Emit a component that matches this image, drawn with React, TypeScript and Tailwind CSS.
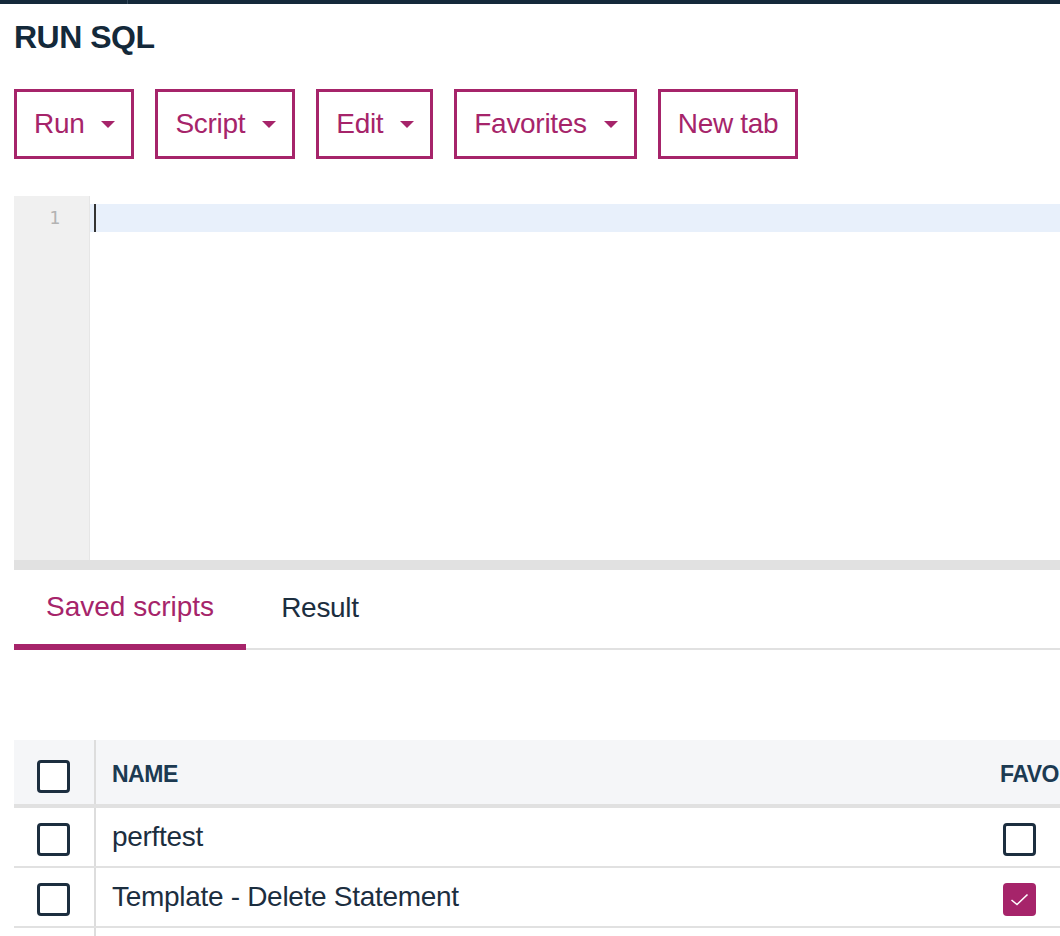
import React from 'react'

const MAGENTA = '#a6246a'

function Caret() {
  return (
    <svg width="14" height="7" viewBox="0 0 14 7" className="shrink-0">
      <path d="M0 0 L14 0 L7 7 Z" fill={MAGENTA} />
    </svg>
  )
}

function ToolButton({ label, menu = true }: { label: string; menu?: boolean }) {
  return (
    <button
      className={
        menu
          ? 'h-[70px] flex items-center gap-[17px] border-[3px] border-[#a6246a] pl-[17px] pr-[16px] text-[28px] text-[#a6246a] tracking-[-0.3px] bg-white'
          : 'h-[70px] flex items-center border-[3px] border-[#a6246a] pl-[17px] pr-[17px] text-[28px] text-[#a6246a] tracking-[-0.3px] bg-white'
      }
    >
      <span>{label}</span>
      {menu && <Caret />}
    </button>
  )
}

function Box({ checked = false }: { checked?: boolean }) {
  if (checked) {
    return (
      <div className="w-[33px] h-[33px] rounded-[4px] bg-[#a6246a] flex items-center justify-center">
        <svg width="19" height="13" viewBox="0 0 19 13">
          <path d="M1.5 7 L7 11.5 L17.5 1.5" fill="none" stroke="white" strokeWidth="1.6" />
        </svg>
      </div>
    )
  }
  return <div className="w-[33px] h-[33px] rounded-[4px] border-[3px] border-[#1c2e3f] bg-white" />
}

const rows = [
  { name: 'perftest', fav: false },
  { name: 'Template - Delete Statement', fav: true },
  { name: '', fav: false },
]

export default function App() {
  return (
    <div
      className="w-screen h-[936px] overflow-hidden bg-white text-[#1c2e3f]"
      style={{ fontFamily: '"Liberation Sans", Arial, sans-serif' }}
    >
      {/* top strip */}
      <div className="h-[4px] bg-[#15293a] flex">
        <div className="w-[128px] border-r border-[#34495c]" />
      </div>

      <div className="w-[1200px] pl-[14px]">
        <h1 className="mt-[15px] text-[32px] leading-[36px] font-bold tracking-[-0.5px] text-[#14293a]">RUN SQL</h1>

        <div className="mt-[34px] flex gap-[21px]">
          <ToolButton label="Run" />
          <ToolButton label="Script" />
          <ToolButton label="Edit" />
          <ToolButton label="Favorites" />
          <ToolButton label="New tab" menu={false} />
        </div>

        {/* editor */}
        <div className="mt-[37px] h-[364px] flex">
          <div className="w-[76px] bg-[#f0f0f0] border-r border-[#e6e6e6] pt-[8px]">
            <div
              className="h-[28px] leading-[28px] text-right pr-[29px] text-[18px] text-[#b3b3b3]"
              style={{ fontFamily: '"DejaVu Sans Mono", monospace' }}
            >
              1
            </div>
          </div>
          <div className="flex-1 pt-[8px]">
            <div className="h-[28px] bg-[#e8f0fb] flex">
              <div className="ml-[4px] w-[2px] h-full bg-[#333]" />
            </div>
          </div>
        </div>
        <div className="h-[10px] bg-[#e1e1e1]" />

        {/* tabs */}
        <div className="flex border-b-2 border-[#e1e1e1] text-[28px]">
          <div className="w-[232px] h-[80px] -mb-[2px] flex items-center justify-center pb-[1px] text-[#a6246a] border-b-[6px] border-[#a6246a]">
            Saved scripts
          </div>
          <div className="w-[148px] h-[78px] flex items-center justify-center pb-[2px] tracking-[-0.3px] text-[#1c2e3f]">
            Result
          </div>
        </div>

        {/* table */}
        <div className="mt-[90px]">
          <div className="flex h-[68px] bg-[#f5f6f8] border-b-4 border-[#e1e1e1]">
            <div className="w-[82px] flex items-center pt-[8px] pl-[23px] border-r-2 border-[#dddddd]">
              <Box />
            </div>
            <div className="w-[904px] pl-[16px] flex items-center pt-[4px] text-[23px] font-bold tracking-[-0.5px] text-[#1c3a52]">
              NAME
            </div>
            <div className="flex items-center pt-[4px] text-[23px] font-bold tracking-[-0.5px] text-[#1c3a52]">
              FAVORITE
            </div>
          </div>
          {rows.map((r, i) => (
            <div key={i} className="flex h-[60px] border-b-2 border-[#e1e1e1]">
              <div className="w-[82px] flex items-center pt-[4px] pl-[23px] border-r-2 border-[#dddddd]">
                <Box />
              </div>
              <div className="w-[904px] pl-[16px] flex items-center text-[28px] tracking-[-0.3px] text-[#1c2e3f]">
                {r.name}
              </div>
              <div className="flex items-center pl-[3px] pt-[4px]">
                <Box checked={r.fav} />
              </div>
            </div>
          ))}
        </div>
      </div>
    </div>
  )
}
